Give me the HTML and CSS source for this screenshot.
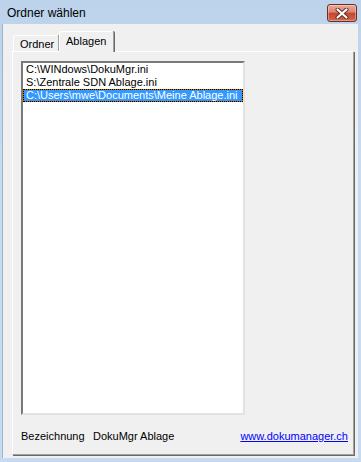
FILE: index.html
```html
<!DOCTYPE html>
<html lang="de">
<head>
    <meta charset="UTF-8">
    <title>Ordner wählen</title>
    <link rel="stylesheet" href="styles.css">
</head>
<body>
    <div class="window">
        <div class="titlebar">
            <span class="title">Ordner wählen</span>
            <button class="close" title="Schliessen">
                <svg width="14" height="11" viewBox="0 0 14 11">
                    <path d="M2.5 1.5 L11.5 9.5 M11.5 1.5 L2.5 9.5" stroke="#5a2a24" stroke-width="4" stroke-linecap="round"/>
                    <path d="M2.5 1.5 L11.5 9.5 M11.5 1.5 L2.5 9.5" stroke="#fff" stroke-width="2.2" stroke-linecap="round"/>
                </svg>
            </button>
        </div>

        <div class="client">
            <div class="tabs">
                <div class="tab">Ordner</div>
                <div class="tab active">Ablagen</div>
            </div>
            <div class="panel">
                <div class="listbox">
                    <div class="item">C:\WINdows\DokuMgr.ini</div>
                    <div class="item">S:\Zentrale SDN Ablage.ini</div>
                    <div class="item selected">C:\Users\mwe\Documents\Meine Ablage.ini</div>
                </div>
                <div class="info">
                    <span class="label">Bezeichnung</span>
                    <span class="value">DokuMgr Ablage</span>
                    <a class="link" href="#">www.dokumanager.ch</a>
                </div>
            </div>
        </div>
    </div>
</body>
</html>
```

FILE: styles.css
```css
body {
    margin: 0;
    padding: 0;
    font-family: "Liberation Sans", Arial, sans-serif;
    font-size: 11px;
    color: #000;
    background: #fff;
}
.window {
    width: 361px;
    height: 462px;
    box-sizing: border-box;
    display: flex;
    flex-direction: column;
    padding: 0 3px 4px 2px;
    background: linear-gradient(to bottom, #bcd3eb, #c8dcf1 40%, #c6dbf1);
}
.titlebar {
    height: 24px;
    display: flex;
    align-items: flex-start;
    justify-content: space-between;
}
.title {
    font-size: 12px;
    margin: 6px 0 0 5px;
    color: #000;
}
.close {
    width: 30px;
    height: 18px;
    margin: 4px 1px 0 0;
    padding: 0;
    border: 1px solid #6d2c24;
    border-radius: 3px;
    background: linear-gradient(to bottom, #e9a899, #d98472 45%, #c3452e 50%, #d2664c);
    box-shadow: inset 0 0 0 1px rgba(255, 255, 255, 0.35);
    display: flex;
    align-items: center;
    justify-content: center;
}
.client {
    flex: 1;
    background: #f0f0f0;
    border-left: 1px solid #9db3cc;
    display: flex;
    flex-direction: column;
    padding: 8px 3px 2px 9px;
}
.tabs {
    display: flex;
    align-items: flex-end;
    height: 19px;
    padding-left: 1px;
}
.tab {
    width: 46px;
    height: 16px;
    box-sizing: border-box;
    padding: 2px 0 0 6px;
    border-top: 1px solid #fff;
    border-left: 1px solid #fff;
    border-right: 1px solid #a0a0a0;
    box-shadow: 1px 0 0 #696969;
    border-radius: 2px 2px 0 0;
    background: #f0f0f0;
}
.tab.active {
    width: 55px;
    height: 21px;
    padding: 3px 0 0 6px;
    margin-bottom: -1px;
    position: relative;
    z-index: 1;
}
.panel {
    flex: 1;
    border-top: 1px solid #fff;
    border-left: 1px solid #fff;
    border-right: 1px solid #a0a0a0;
    border-bottom: 1px solid #a0a0a0;
    box-shadow: 1px 1px 0 #696969;
    margin-right: 1px;
    margin-bottom: 1px;
    display: flex;
    flex-direction: column;
    padding: 9px 5px 0 8px;
}
.listbox {
    width: 224px;
    height: 354px;
    box-sizing: border-box;
    background: #fff;
    border-top: 2px solid #7a7a7a;
    border-left: 2px solid #7a7a7a;
    border-right: 2px solid #e3e3e3;
    border-bottom: 2px solid #e3e3e3;
}
.item {
    height: 13px;
    line-height: 13px;
    padding-left: 3px;
    white-space: nowrap;
}
.item.selected {
    background: #3399ff;
    color: #fff;
    outline: 1px dotted #000;
    outline-offset: -1px;
    box-shadow: inset 0 0 0 1px #cc6600;
}
.info {
    display: flex;
    align-items: center;
    margin-top: 15px;
    line-height: 13px;
}
.label {
    width: 72px;
}
.link {
    margin-left: auto;
    color: #0000ff;
    text-decoration: underline;
}
```
